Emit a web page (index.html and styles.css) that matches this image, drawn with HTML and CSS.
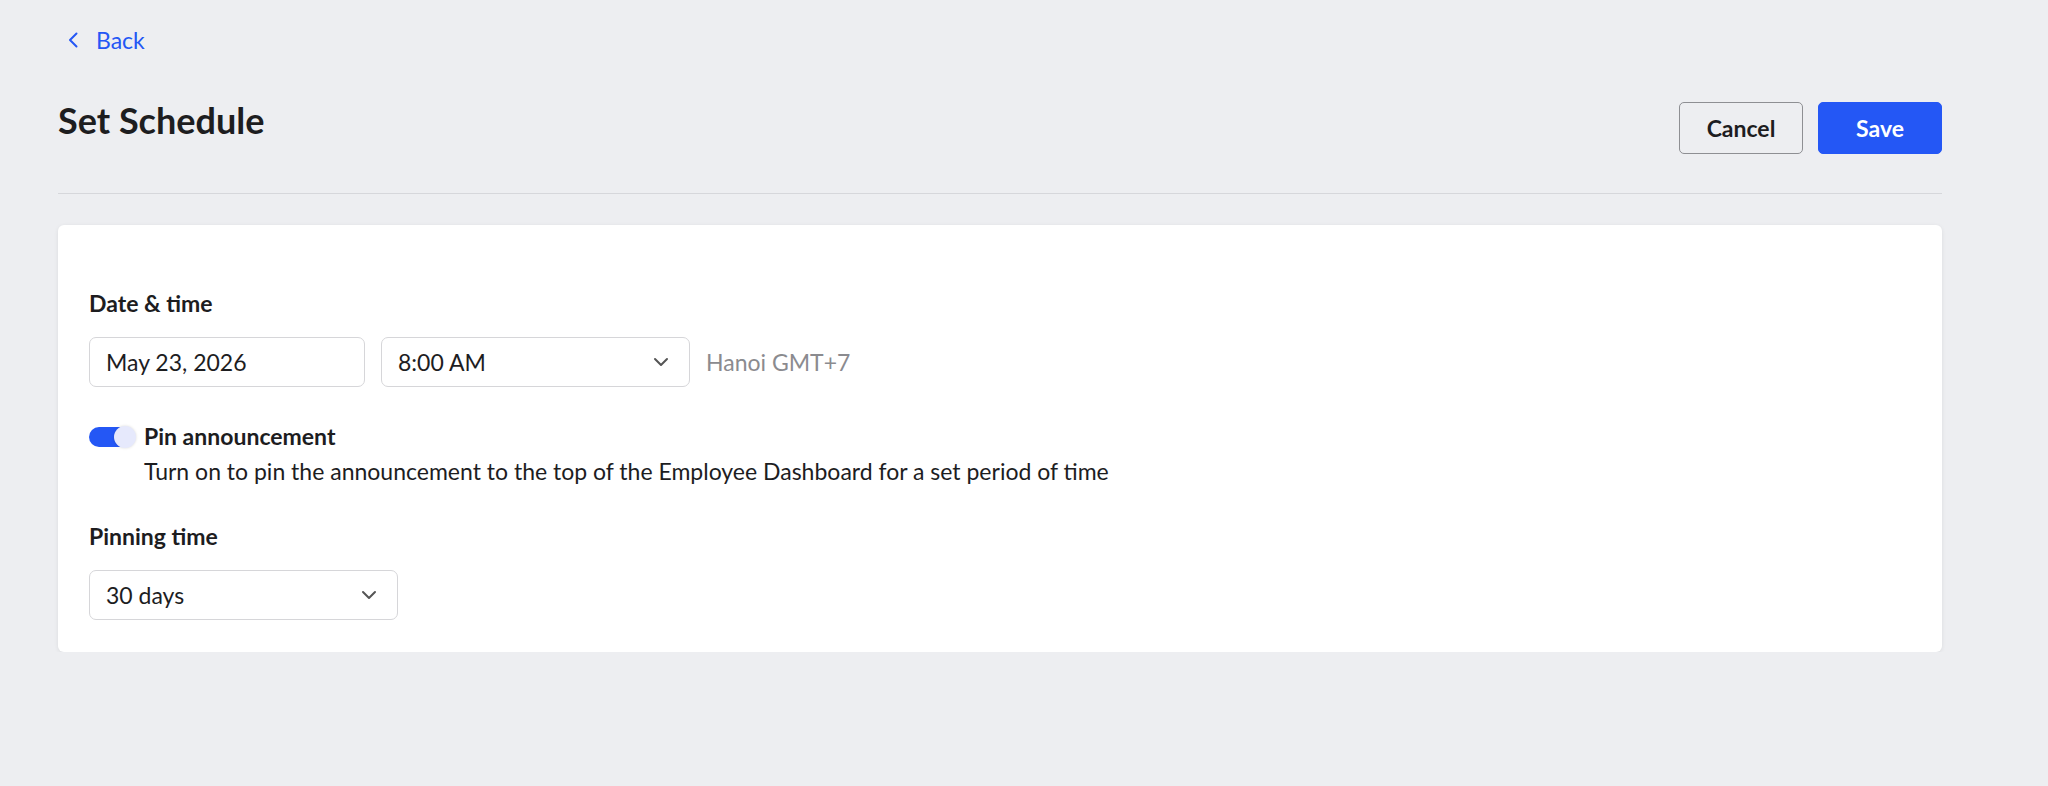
FILE: index.html
```html
<!DOCTYPE html>
<html lang="en">
<head>
    <meta charset="UTF-8">
    <meta name="viewport" content="width=device-width, initial-scale=1.0">
    <title>Set Schedule</title>
    <link rel="stylesheet" href="styles.css">
</head>
<body>
    <div class="page">
        <!-- Back link -->
        <a class="back-link" href="#">
            <svg class="back-icon" width="12" height="16" viewBox="0 0 12 16">
                <path d="M9.5 1.5 L3 8 L9.5 14.5" fill="none" stroke="currentColor" stroke-width="2" stroke-linecap="round" stroke-linejoin="round"/>
            </svg>
            Back
        </a>

        <!-- Page header with actions -->
        <div class="page-header">
            <h1>Set Schedule</h1>
            <div class="actions">
                <button class="btn btn-cancel">Cancel</button>
                <button class="btn btn-save">Save</button>
            </div>
        </div>

        <!-- Schedule form card -->
        <div class="card">
            <div class="field-label">Date &amp; time</div>
            <div class="date-row">
                <div class="input date-input">May 23, 2026</div>
                <div class="input select time-select">
                    <span>8:00 AM</span>
                    <svg class="caret" width="16" height="10" viewBox="0 0 16 10">
                        <path d="M2 2 L8 8 L14 2" fill="none" stroke="currentColor" stroke-width="2" stroke-linecap="round" stroke-linejoin="round"/>
                    </svg>
                </div>
                <span class="timezone">Hanoi GMT+7</span>
            </div>

            <div class="pin-row">
                <span class="toggle"><span class="toggle-knob"></span></span>
                <div>
                    <div class="pin-title">Pin announcement</div>
                    <div class="pin-desc">Turn on to pin the announcement to the top of the Employee Dashboard for a set period of time</div>
                </div>
            </div>

            <div class="field-label pin-label">Pinning time</div>
            <div class="input select pin-select">
                <span>30 days</span>
                <svg class="caret" width="16" height="10" viewBox="0 0 16 10">
                    <path d="M2 2 L8 8 L14 2" fill="none" stroke="currentColor" stroke-width="2" stroke-linecap="round" stroke-linejoin="round"/>
                </svg>
            </div>
        </div>
    </div>
</body>
</html>
```

FILE: styles.css
```css
/* Base page */
body {
    margin: 0;
    background-color: #edeef1;
    font-family: Lato, "Open Sans", sans-serif;
    color: #1d1d1f;
}

.page {
    padding: 26px 106px 0 58px;
}

.back-link {
    display: inline-flex;
    align-items: center;
    color: #2457f5;
    text-decoration: none;
    font-size: 23px;
    line-height: 28px;
}

.back-icon {
    margin-left: 9px;
    margin-right: 17px;
}

/* Header */
.page-header {
    display: flex;
    justify-content: space-between;
    align-items: flex-start;
    margin-top: 44px;
    padding-bottom: 39px;
    border-bottom: 1px solid #d6d7db;
}

h1 {
    margin: 0;
    font-size: 36px;
    line-height: 44px;
    font-weight: 700;
    color: #1d1d1f;
}

.actions {
    display: flex;
    gap: 15px;
    margin-top: 4px;
}

.btn {
    width: 124px;
    height: 52px;
    border-radius: 5px;
    font-family: Lato, sans-serif;
    font-size: 23px;
    font-weight: 700;
    cursor: pointer;
}

.btn-cancel {
    background-color: transparent;
    border: 1px solid #8e8f93;
    color: #1d1d1f;
}

.btn-save {
    background-color: #2457f5;
    border: 1px solid #2457f5;
    color: white;
}

/* Card */
.card {
    margin-top: 31px;
    background-color: white;
    border-radius: 6px;
    box-shadow: 0 1px 4px rgba(0, 0, 0, 0.08);
    padding: 64px 31px 32px;
}

.field-label {
    font-size: 23px;
    line-height: 28px;
    font-weight: 700;
    margin-bottom: 20px;
}

.date-row {
    display: flex;
    align-items: center;
    gap: 16px;
}

.input {
    box-sizing: border-box;
    height: 50px;
    border: 1px solid #d6d6d9;
    border-radius: 7px;
    padding: 0 20px 0 16px;
    display: flex;
    align-items: center;
    font-size: 23px;
    background-color: white;
}

.date-input {
    width: 276px;
}

.select {
    justify-content: space-between;
}

.caret {
    color: #555;
}

.time-select {
    width: 309px;
}

.pin-select {
    width: 309px;
}

.timezone {
    color: #8b8b8f;
    font-size: 23px;
}

/* Pin toggle */
.pin-row {
    display: flex;
    align-items: flex-start;
    gap: 9px;
    margin-top: 35px;
}

.toggle {
    position: relative;
    width: 46px;
    height: 20px;
    margin-top: 5px;
    border-radius: 10px;
    background-color: #2457f5;
    flex-shrink: 0;
}

.toggle-knob {
    position: absolute;
    right: -1px;
    top: -1px;
    width: 22px;
    height: 22px;
    border-radius: 50%;
    background-color: #e6e9fc;
    box-shadow: 0 0 3px rgba(0, 0, 0, 0.15);
}

.pin-title {
    font-size: 23px;
    line-height: 28px;
    font-weight: 700;
}

.pin-desc {
    font-size: 23px;
    line-height: 28px;
    margin-top: 7px;
}

.pin-label {
    margin-top: 37px;
}
```
